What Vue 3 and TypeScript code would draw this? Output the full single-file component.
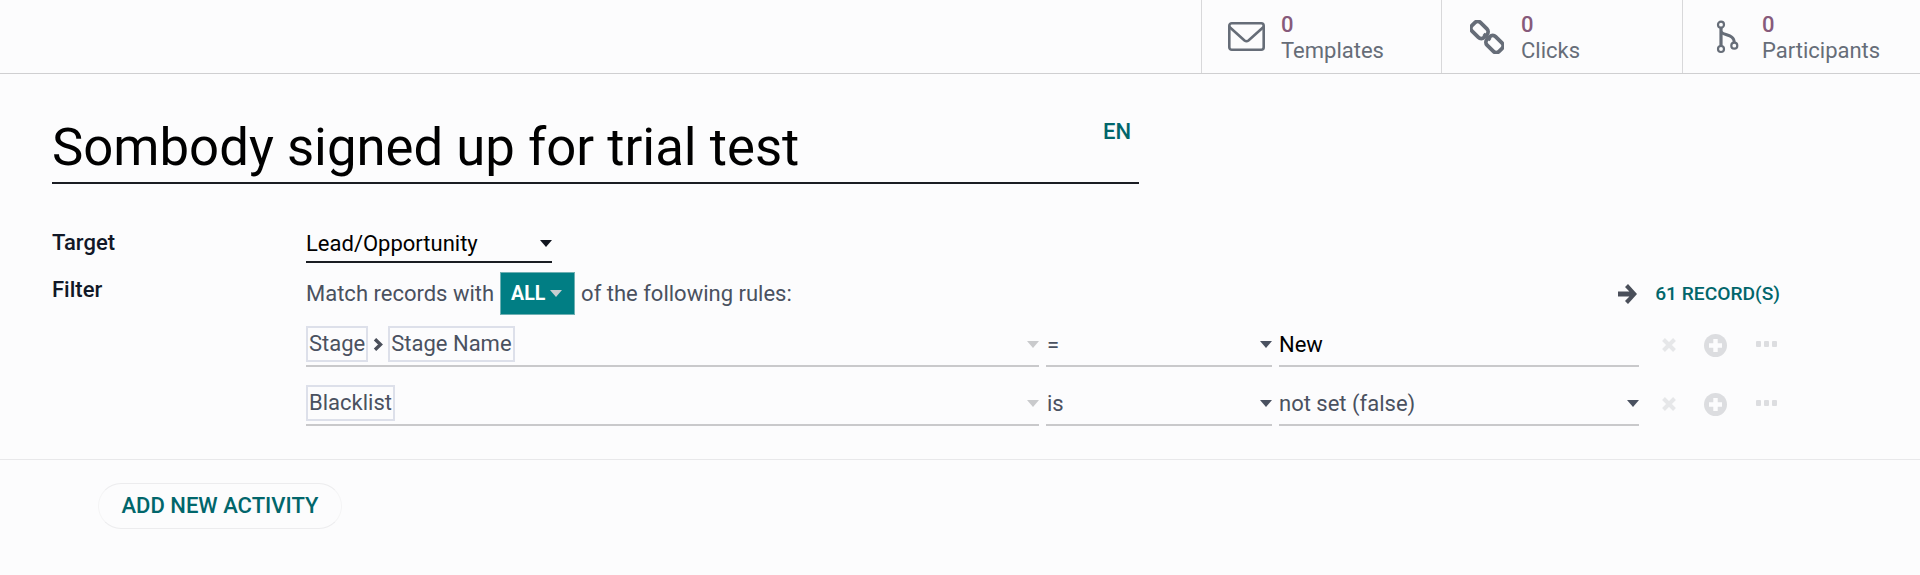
<script setup lang="ts">
interface Stat {
  label: string
  icon: string
  width: number
}

interface Rule {
  path: string[]
  op: string
  value: string
  valueSelect: boolean
}

const stats: Stat[] = [
  { label: 'Templates', icon: 'mail', width: 240 },
  { label: 'Clicks', icon: 'link', width: 241 },
  { label: 'Participants', icon: 'fork', width: 238 },
]

const rules: Rule[] = [
  { path: ['Stage', 'Stage Name'], op: '=', value: 'New', valueSelect: false },
  { path: ['Blacklist'], op: 'is', value: 'not set (false)', valueSelect: true },
]
</script>

<template>
  <div class="page">
    <header class="stats">
      <div v-for="s in stats" :key="s.label" class="stat" :style="{ width: s.width + 'px' }">
        <div class="stat-icon">
          <svg v-if="s.icon === 'mail'" width="37" height="29" viewBox="0 0 37 29" fill="none" stroke="#666d78" stroke-width="2.6">
            <rect x="1.3" y="1.3" width="34.4" height="26.4" rx="2.5" />
            <path d="M1.5 5 L16.5 18.5 Q18.5 20 20.5 18.5 L35.5 5" />
          </svg>
          <svg v-else-if="s.icon === 'link'" class="icon-link" width="34" height="34" viewBox="0 0 34 34" fill="none" stroke="#666d78" stroke-width="3.8">
            <rect x="-6" y="-8.5" width="12" height="17" rx="4" transform="translate(9.5 10) rotate(-45)" />
            <rect x="-6" y="-8.5" width="12" height="17" rx="4" transform="translate(24.5 24) rotate(-45)" />
            <path d="M13.5 14 L20.5 20" stroke-width="3" />
          </svg>
          <svg v-else class="icon-fork" width="23" height="34" viewBox="0 0 23 34" fill="none" stroke="#666d78" stroke-width="2.2">
            <circle cx="5" cy="4.7" r="3" />
            <circle cx="5" cy="29" r="3" />
            <circle cx="18.3" cy="25.7" r="3" />
            <path d="M5 8 V26" stroke-width="3.2" />
            <path d="M5 12 C9 16 18 14 18.3 22.7" stroke-width="3" />
          </svg>
        </div>
        <div class="stat-text">
          <span class="stat-value">0</span>
          <span class="stat-label">{{ s.label }}</span>
        </div>
      </div>
    </header>

    <section class="sheet">
      <div class="title-row">
        <h1 class="title">Sombody signed up for trial test</h1>
        <span class="lang">EN</span>
      </div>

      <div class="form">
        <label class="field-label target-label">Target</label>
        <div class="target-select">
          <span>Lead/Opportunity</span>
          <i class="caret dark"></i>
        </div>

        <label class="field-label filter-label">Filter</label>
        <div class="filter">
          <div class="match">
            <span>Match records with</span>
            <span class="all-btn">ALL<i class="caret light"></i></span>
            <span>of the following rules:</span>
            <span class="records">
              <svg width="19" height="20" viewBox="0 0 19 20" fill="#4a4f5a">
                <path d="M10 0 L19 10 L10 20 L7 17 L11.4 12.6 L0 12.6 L0 7.4 L11.4 7.4 L7 3 Z" />
              </svg>
              <b>61 RECORD(S)</b>
            </span>
          </div>

          <div v-for="r in rules" :key="r.op" class="rule">
            <div class="cell path-cell">
              <template v-for="(p, i) in r.path" :key="p">
                <svg v-if="i > 0" class="chev" width="10" height="13" viewBox="0 0 10 13" fill="none" stroke="#4a4f5a" stroke-width="3.4">
                  <path d="M2 1.2 L7.5 6.5 L2 11.8" />
                </svg>
                <span class="tag">{{ p }}</span>
              </template>
              <i class="caret pale"></i>
            </div>
            <div class="cell op-cell">
              <span>{{ r.op }}</span>
              <i class="caret grey"></i>
            </div>
            <div class="cell value-cell" :class="{ plain: !r.valueSelect }">
              <span>{{ r.value }}</span>
              <i v-if="r.valueSelect" class="caret grey"></i>
            </div>
            <div class="rule-actions">
              <svg width="14" height="14" viewBox="0 0 14 14" stroke="#e6e7e9" stroke-width="4">
                <path d="M1.5 1.5 L12.5 12.5 M12.5 1.5 L1.5 12.5" />
              </svg>
              <svg class="plus" width="23" height="23" viewBox="0 0 23 23">
                <circle cx="11.5" cy="11.5" r="11.5" fill="#dcdde0" />
                <path d="M11.5 5 V18 M5 11.5 H18" stroke="#fcfcfd" stroke-width="4.4" />
              </svg>
              <span class="dots"><i></i><i></i><i></i></span>
            </div>
          </div>
        </div>
      </div>
    </section>

    <footer class="activities">
      <button class="add-btn">ADD NEW ACTIVITY</button>
    </footer>
  </div>
</template>

<style scoped>
.page {
  height: 575px;
  background: #fcfcfd;
  font-family: Roboto, "Liberation Sans", sans-serif;
  font-size: 22px;
  color: #4a5160;
  overflow: hidden;
}

.stats {
  display: flex;
  justify-content: flex-end;
  height: 73px;
  border-bottom: 1px solid #cfcfd1;
}

.stat {
  display: flex;
  align-items: center;
  box-sizing: border-box;
  border-left: 1px solid #d8d8da;
  padding-left: 26px;
}

.stat-icon {
  width: 53px;
  display: flex;
  align-items: center;
}

.icon-link {
  margin-left: 2px;
}

.icon-fork {
  margin-left: 7px;
}

.stat-text {
  display: flex;
  flex-direction: column;
  line-height: 26px;
  margin-top: 2px;
}

.stat-value {
  color: #875a7b;
  font-weight: 500;
}

.stat-label {
  color: #666d78;
}

.sheet {
  padding: 0 0 0 52px;
  height: 386px;
  box-sizing: border-box;
  border-bottom: 1px solid #e8e8ea;
}

.title-row {
  display: flex;
  width: 1087px;
  height: 110px;
  box-sizing: border-box;
  border-bottom: 2px solid #1a1d23;
  align-items: flex-start;
  justify-content: space-between;
}

.title {
  margin: 39px 0 0;
  font-size: 52.7px;
  font-weight: 400;
  line-height: 69px;
  color: #000;
}

.lang {
  margin: 45px 8px 0 0;
  color: #01666b;
  font-weight: 500;
}

.form {
  display: grid;
  grid-template-columns: 254px 1px;
  margin-top: 41px;
}

.field-label {
  color: #111827;
  font-weight: 500;
}

.target-label {
  line-height: 36px;
}

.target-select {
  width: 246px;
  height: 38px;
  box-sizing: border-box;
  border-bottom: 2px solid #1a1d23;
  color: #000;
  display: flex;
  align-items: center;
  justify-content: space-between;
  white-space: nowrap;
}

.filter-label {
  margin-top: 9px;
  line-height: 36px;
}

.filter {
  width: 1474px;
  margin-top: 9px;
}

.match {
  display: flex;
  align-items: center;
  gap: 6px;
  height: 43px;
  white-space: nowrap;
}

.all-btn {
  display: flex;
  align-items: center;
  gap: 5px;
  height: 43px;
  width: 75px;
  box-sizing: border-box;
  padding: 0 10px;
  background: #017e84;
  border: 1px solid #6fb0b3;
  color: #fff;
  font-size: 19.5px;
  font-weight: 700;
}

.records {
  margin-left: auto;
  display: flex;
  align-items: center;
  gap: 18px;
  font-size: 19.2px;
}

.records b {
  color: #01666b;
  font-weight: 500;
}

.rule {
  display: flex;
  height: 41px;
  margin-top: 18px;
}

.match + .rule {
  margin-top: 11px;
}

.cell {
  flex: none;
  display: flex;
  align-items: center;
  justify-content: space-between;
  box-sizing: border-box;
  height: 41px;
  padding-bottom: 3px;
  border-bottom: 2px solid #c9c9cb;
  white-space: nowrap;
}

.path-cell {
  width: 733px;
  justify-content: flex-start;
  gap: 5px;
}

.path-cell .caret {
  margin-left: auto;
}

.op-cell {
  width: 226px;
  margin-left: 7px;
  padding-left: 1px;
}

.value-cell {
  width: 360px;
  margin-left: 7px;
}

.value-cell.plain {
  color: #000;
}

.tag {
  box-sizing: border-box;
  height: 36px;
  line-height: 32px;
  padding: 0 1px;
  border: 2px solid #dde0ea;
}

.chev {
  flex: none;
}

.caret {
  display: inline-block;
  width: 0;
  height: 0;
  border-left: 6.5px solid transparent;
  border-right: 6.5px solid transparent;
  border-top: 7px solid #000;
}

.caret.dark {
  border-top-color: #11151f;
}

.caret.light {
  border-top-color: #c8cdd0;
}

.caret.grey {
  border-top-color: #4a5160;
}

.caret.pale {
  border-top-color: #c9cacc;
}

.rule-actions {
  flex: none;
  display: flex;
  align-items: center;
  height: 41px;
  padding-left: 23px;
  padding-bottom: 3px;
  box-sizing: border-box;
}

.plus {
  margin-left: 28px;
}

.dots {
  display: flex;
  gap: 3px;
  margin-left: 29px;
  margin-top: -2px;
}

.dots i {
  width: 5px;
  height: 6px;
  border-radius: 1px;
  background: #dcdde0;
}

.activities {
  padding: 23px 0 0 98px;
}

.add-btn {
  width: 244px;
  height: 46px;
  padding: 0 0 1px;
  background: transparent;
  border: 1px solid #ececee;
  border-left-color: #f4f4f5;
  border-right-color: #f4f4f5;
  border-radius: 23px;
  font-family: inherit;
  font-size: 22px;
  font-weight: 500;
  color: #01666b;
}
</style>

<style>
html,
body {
  margin: 0;
  background: #fcfcfd;
}
</style>
